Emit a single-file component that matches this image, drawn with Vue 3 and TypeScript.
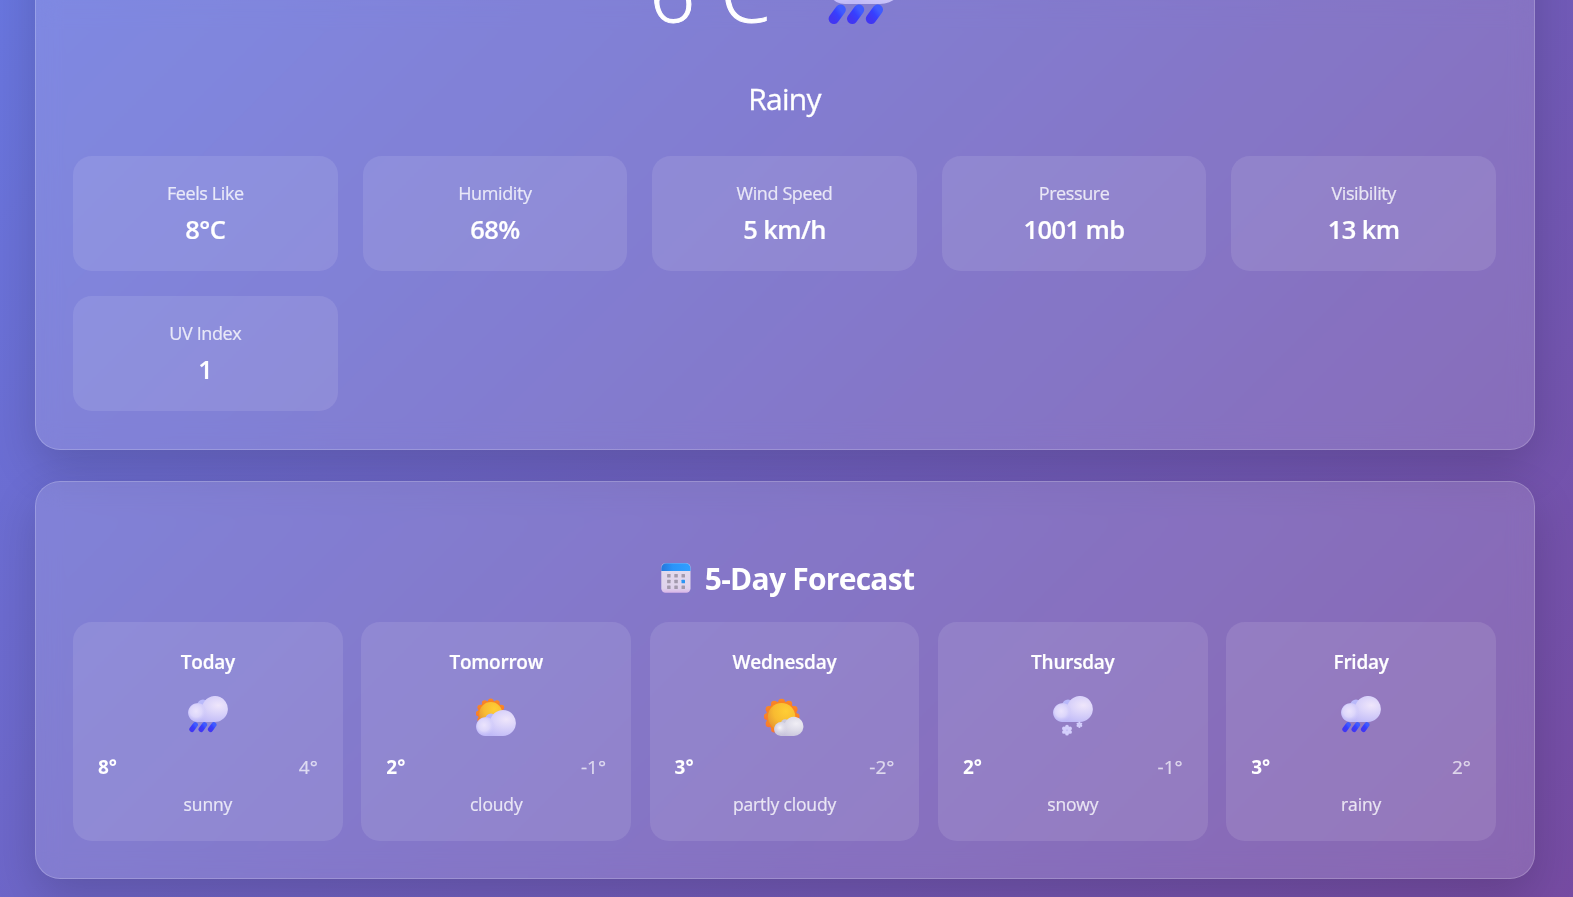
<script setup lang="ts">
import { defineComponent, h } from 'vue'

type Kind = 'rain' | 'cloud' | 'partly' | 'snow'

interface Detail {
  label: string
  value: string
}

interface Day {
  name: string
  icon: Kind
  high: number
  low: number
  text: string
}

const details: Detail[] = [
  { label: 'Feels Like', value: '8°C' },
  { label: 'Humidity', value: '68%' },
  { label: 'Wind Speed', value: '5 km/h' },
  { label: 'Pressure', value: '1001 mb' },
  { label: 'Visibility', value: '13 km' },
  { label: 'UV Index', value: '1' },
]

const days: Day[] = [
  { name: 'Today', icon: 'rain', high: 8, low: 4, text: 'sunny' },
  { name: 'Tomorrow', icon: 'cloud', high: 2, low: -1, text: 'cloudy' },
  { name: 'Wednesday', icon: 'partly', high: 3, low: -2, text: 'partly cloudy' },
  { name: 'Thursday', icon: 'snow', high: 2, low: -1, text: 'snowy' },
  { name: 'Friday', icon: 'rain', high: 3, low: 2, text: 'rainy' },
]

const scallops = Array.from({ length: 12 }, (_, i) => {
  const a = (i * Math.PI) / 6
  return { x: 14.6 * Math.cos(a), y: 14.6 * Math.sin(a) }
})

const petals = Array.from({ length: 6 }, (_, i) => {
  const a = ((i + 0.5) * Math.PI) / 3
  return { x: 3.5 * Math.cos(a), y: 3.5 * Math.sin(a) }
})

const sun = () =>
  h('g', [
    ...scallops.map((p) => h('circle', { cx: p.x, cy: p.y, r: 3.3, fill: 'url(#ray)' })),
    h('circle', { r: 15.4, fill: '#f98324' }),
    h('circle', { r: 13.7, fill: 'url(#sun)' }),
  ])

const cloud = (main: string, side: string, bump: string) =>
  h('g', [
    h('circle', { cx: 15, cy: 9, r: 5.6, fill: bump }),
    h('path', {
      d: 'M9.4 26A9.4 9.4 0 1 1 14.6 8.7A13 13 0 1 1 27 26z',
      fill: `url(#${main})`,
    }),
    h('circle', { cx: 9.6, cy: 16.6, r: 9.4, fill: `url(#${side})` }),
  ])

const flake = (x: number, y: number, s: number) =>
  h('g', { transform: `translate(${x} ${y}) scale(${s})`, fill: '#d4cffc' }, [
    h('circle', { r: 3.6 }),
    ...petals.map((p) => h('circle', { cx: p.x, cy: p.y, r: 1.8 })),
    h('circle', { r: 1, fill: '#c4bdf6' }),
  ])

const WeatherIcon = defineComponent({
  props: { kind: { type: String, required: true } },
  setup(props) {
    return () => {
      const parts = []
      if (props.kind === 'rain' || props.kind === 'snow') {
        parts.push(cloud('cloudMain', 'cloudSide', '#b9b9fa'))
      }
      if (props.kind === 'rain') {
        for (const x of [0.3, 9.5, 18.9]) {
          parts.push(
            h('path', {
              d: `M${x + 7} 28.8L${x + 3.6} 33.4`,
              stroke: 'url(#drop)',
              'stroke-width': 5.2,
              'stroke-linecap': 'round',
            }),
          )
        }
      }
      if (props.kind === 'snow') {
        parts.push(flake(14, 34.2, 1.02), flake(26.4, 28.8, 0.6))
      }
      if (props.kind === 'cloud') {
        parts.push(h('g', { transform: 'translate(14.8 17.6) scale(.84)' }, [sun()]))
        parts.push(
          h('g', { transform: 'translate(0 14)' }, [cloud('cloudMain', 'cloudSide', '#b9b9fa')]),
        )
      }
      if (props.kind === 'partly') {
        parts.push(h('g', { transform: 'translate(17.6 20.6)' }, [sun()]))
        parts.push(
          h('g', { transform: 'translate(10 20.8) scale(.738)' }, [
            cloud('greyMain', 'greySide', '#cbc9dc'),
          ]),
        )
      }
      return h('svg', { viewBox: '0 0 40 40', fill: 'none' }, parts)
    }
  },
})
</script>

<template>
  <div class="page">
    <svg class="defs" width="0" height="0" aria-hidden="true">
      <defs>
        <radialGradient id="cloudMain" cx=".76" cy=".36" r=".72">
          <stop offset="0" stop-color="#efe6fb" />
          <stop offset=".4" stop-color="#dcd5fa" />
          <stop offset="1" stop-color="#bfb9f7" />
        </radialGradient>
        <radialGradient id="cloudSide" cx=".42" cy=".42" r=".58">
          <stop offset="0" stop-color="#ebe4fd" />
          <stop offset=".55" stop-color="#dcd6fb" />
          <stop offset="1" stop-color="#cbc6fa" stop-opacity="0" />
        </radialGradient>
        <radialGradient id="greyMain" cx=".76" cy=".36" r=".72">
          <stop offset="0" stop-color="#f0eef5" />
          <stop offset=".5" stop-color="#dddbe8" />
          <stop offset="1" stop-color="#c8c4dc" />
        </radialGradient>
        <radialGradient id="greySide" cx=".4" cy=".4" r=".6">
          <stop offset="0" stop-color="#f7f6fa" />
          <stop offset="1" stop-color="#d8d5e4" stop-opacity="0" />
        </radialGradient>
        <radialGradient id="sun" cx=".66" cy=".3" r=".75">
          <stop offset="0" stop-color="#ffce35" />
          <stop offset=".6" stop-color="#f8bb31" />
          <stop offset="1" stop-color="#e79a32" />
        </radialGradient>
        <linearGradient id="ray" x1="0" y1="0" x2="0" y2="1">
          <stop offset="0" stop-color="#fb8a22" />
          <stop offset="1" stop-color="#f5743a" />
        </linearGradient>
        <linearGradient id="drop" x1="1" y1="0" x2="0" y2="1">
          <stop offset="0" stop-color="#3f5bff" />
          <stop offset=".5" stop-color="#363fff" />
          <stop offset="1" stop-color="#4136f2" />
        </linearGradient>
        <linearGradient id="calTop" x1="0" y1="0" x2="1" y2="0">
          <stop offset="0" stop-color="#2477dc" />
          <stop offset=".4" stop-color="#2a94fa" />
          <stop offset="1" stop-color="#319fff" />
        </linearGradient>
        <linearGradient id="calBody" x1="0" y1="0" x2="0" y2="1">
          <stop offset="0" stop-color="#e3dcec" />
          <stop offset=".85" stop-color="#dfd3ec" />
          <stop offset="1" stop-color="#d9b5e8" />
        </linearGradient>
      </defs>
    </svg>

    <section class="panel current">
      <div class="now">
        <span class="degrees">6°C</span>
        <WeatherIcon class="now-icon" kind="rain" />
      </div>
      <p class="condition">Rainy</p>
      <div class="details">
        <div v-for="d in details" :key="d.label" class="detail">
          <div class="label">{{ d.label }}</div>
          <div class="value">{{ d.value }}</div>
        </div>
      </div>
    </section>

    <section class="panel forecast">
      <h2 class="title">
        <svg class="calendar" viewBox="0 0 30 30">
          <rect x=".3" y=".3" width="29.2" height="29.4" rx="4.2" fill="url(#calBody)" />
          <path d="M.3 8V5A4.7 4.7 0 0 1 5 .3h19.8A4.7 4.7 0 0 1 29.5 5v3z" fill="url(#calTop)" />
          <template v-for="r in 3" :key="r">
            <rect
              v-for="c in 3"
              :key="c"
              :x="c * 7.2 - 1.1"
              :y="r * 5.8 + 5.2"
              width="3.5"
              height="3.5"
              rx=".5"
              :fill="r === 2 && c === 3 ? '#2b95f3' : '#a39aad'"
            />
          </template>
        </svg>
        <span>5-Day Forecast</span>
      </h2>
      <div class="days">
        <div v-for="d in days" :key="d.name" class="day">
          <div class="name">{{ d.name }}</div>
          <WeatherIcon class="icon" :kind="d.icon" />
          <div class="temps">
            <span class="high">{{ d.high }}°</span>
            <span class="low">{{ d.low }}°</span>
          </div>
          <div class="text">{{ d.text }}</div>
        </div>
      </div>
    </section>
  </div>
</template>

<style>
html,
body {
  margin: 0;
  overflow: hidden;
}
</style>

<style scoped>
.page {
  box-sizing: border-box;
  height: 897px;
  overflow: hidden;
  padding: 0 38px 0 35px;
  color: #fff;
  font-family: 'Open Sans', 'Noto Sans', sans-serif;
  background: linear-gradient(135deg, #667eea 0%, #764ba2 100%) 0 -490px / 100% 1400px no-repeat;
}
.defs {
  position: absolute;
}
.panel {
  box-sizing: border-box;
  display: flex;
  flex-direction: column;
  padding: 37px 38px 37px 37px;
  border: 1px solid rgba(255, 255, 255, 0.2);
  border-radius: 25px;
  background: rgba(255, 255, 255, 0.15);
  backdrop-filter: blur(12px);
  box-shadow: 0 18px 46px rgba(0, 0, 0, 0.16);
}
.current {
  height: 650px;
  margin-top: -200px;
  padding-bottom: 38px;
  justify-content: flex-end;
}
.forecast {
  height: 398px;
  margin-top: 31px;
}
.now {
  display: flex;
  justify-content: center;
  align-items: center;
  gap: 60px;
  height: 106px;
  margin: 0 14px 34px 0;
}
.degrees {
  position: relative;
  top: -1px;
  font-size: 80px;
  line-height: 106px;
  font-weight: 300;
  letter-spacing: -4.5px;
  -webkit-text-stroke: 1px #fff;
}
.now-icon {
  width: 80px;
  height: 80px;
}
.condition {
  margin: 0 0 37px;
  text-align: center;
  font-size: 30px;
  line-height: 40px;
  letter-spacing: -0.7px;
  -webkit-text-stroke: 0.3px #fff;
}
.details {
  display: grid;
  grid-template-columns: repeat(5, 1fr);
  gap: 25px;
}
.detail {
  box-sizing: border-box;
  height: 115px;
  padding: 25px;
  border-radius: 18.75px;
  text-align: center;
  background: rgba(255, 255, 255, 0.1);
}
.label {
  margin-bottom: 7px;
  font-size: 18px;
  line-height: 24px;
  letter-spacing: -0.4px;
  -webkit-text-stroke: 0.2px #fff;
  opacity: 0.8;
}
.value {
  font-size: 25.5px;
  line-height: 34px;
  font-weight: 600;
  letter-spacing: -0.6px;
  -webkit-text-stroke: 0.2px #fff;
}
.title {
  display: flex;
  justify-content: center;
  align-items: center;
  gap: 14px;
  margin: 38.5px 0 24px 6px;
  font-size: 30px;
  line-height: 40px;
  font-weight: 700;
  letter-spacing: -0.75px;
}
.title span {
  position: relative;
  top: 1px;
}
.calendar {
  width: 30px;
  height: 30px;
}
.days {
  display: grid;
  grid-template-columns: repeat(5, 1fr);
  gap: 18.5px;
}
.day {
  box-sizing: border-box;
  height: 219px;
  padding: 26px 25px 24px;
  border-radius: 18.75px;
  text-align: center;
  background: rgba(255, 255, 255, 0.1);
}
.name {
  font-size: 19px;
  line-height: 28px;
  font-weight: 600;
  letter-spacing: -0.25px;
  -webkit-text-stroke: 0.2px #fff;
}
.icon {
  display: block;
  width: 40px;
  height: 40px;
  margin: 20px auto 18px;
}
.temps {
  display: flex;
  justify-content: space-between;
  font-size: 19px;
  line-height: 26px;
}
.high {
  font-weight: 700;
}
.low {
  -webkit-text-stroke: 0.2px #fff;
  opacity: 0.7;
}
.text {
  margin-top: 13px;
  font-size: 17.5px;
  line-height: 22px;
  letter-spacing: -0.15px;
  -webkit-text-stroke: 0.2px #fff;
  opacity: 0.8;
}
</style>
